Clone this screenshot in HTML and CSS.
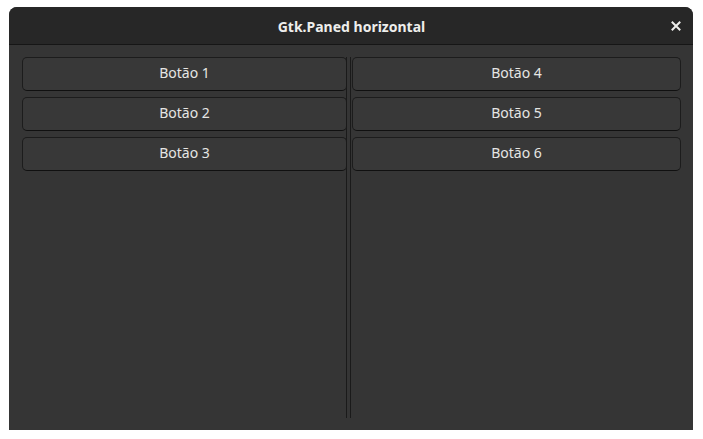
FILE: index.html
```html
<!DOCTYPE html>
<html>
<head>
<meta charset="utf-8">
<link rel="stylesheet" href="styles.css">
</head>
<body>
<div class="window">
  <header class="titlebar">
    <span class="title">Gtk.Paned horizontal</span>
    <button class="close" aria-label="Fechar">
      <svg width="10" height="10" viewBox="0 0 10 10"><path d="M1.5 1.5 L8.5 8.5 M8.5 1.5 L1.5 8.5" stroke="#eeeeec" stroke-width="2" stroke-linecap="square"/></svg>
    </button>
  </header>
  <main class="content">
    <div class="paned">
      <div class="pane pane-left">
        <button class="btn">Botão 1</button>
        <button class="btn">Botão 2</button>
        <button class="btn">Botão 3</button>
      </div>
      <div class="handle"></div>
      <div class="pane pane-right">
        <button class="btn">Botão 4</button>
        <button class="btn">Botão 5</button>
        <button class="btn">Botão 6</button>
      </div>
    </div>
  </main>
</div>
</body>
</html>
```
FILE: styles.css
```css
html, body {
  margin: 0;
  padding: 0;
  background: #ffffff;
}
body {
  padding: 7px 10px 0 9px;
  font-family: "Noto Sans", "Open Sans", sans-serif;
}
.window {
  width: 684px;
  height: 423px;
  background: #353535;
  border-radius: 8px 8px 0 0;
  display: flex;
  flex-direction: column;
  overflow: hidden;
}
.titlebar {
  height: 37px;
  flex: none;
  background: #272727;
  border-bottom: 1px solid #161616;
  position: relative;
  display: flex;
  align-items: center;
  justify-content: center;
}
.title {
  color: #eeeeec;
  font-weight: bold;
  font-size: 14px;
  margin-left: 1px;
  padding-top: 1px;
}
.close {
  position: absolute;
  right: 11px;
  top: 13px;
  width: 12px;
  height: 12px;
  padding: 0;
  border: 0;
  background: none;
  display: flex;
  align-items: center;
  justify-content: center;
}
.content {
  flex: 1;
  padding: 12px 12px 12px 13px;
  display: flex;
}
.paned {
  flex: 1;
  display: flex;
}
.pane {
  display: flex;
  flex-direction: column;
  gap: 6px;
}
.pane-left { width: 325px; }
.pane-right { flex: 1; }
.handle {
  width: 3px;
  flex: none;
  border-left: 1px solid #1a1a1a;
  border-right: 1px solid #1a1a1a;
  margin-left: -1px;
  margin-right: 1px;
}
.btn {
  height: 34px;
  box-sizing: border-box;
  background: #383838;
  border: 1px solid #1c1c1c;
  border-bottom-color: #101010;
  border-radius: 5px;
  color: #e6e6e4;
  font-family: "Noto Sans", "Open Sans", sans-serif;
  font-size: 14px;
  padding: 0 0 3px 0;
  margin: 0;
}
```
